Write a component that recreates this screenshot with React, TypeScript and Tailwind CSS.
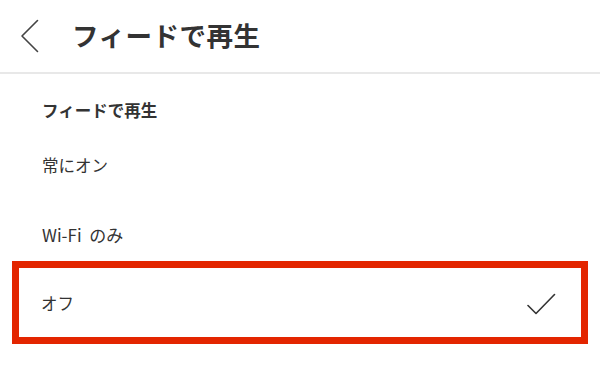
const font = { fontFamily: '"Noto Sans CJK JP", "Noto Sans", sans-serif' };

export default function App() {
  return (
    <div className="w-[600px] h-[385px] bg-white text-[#333333] overflow-hidden" style={font}>
      <header className="h-[74px] flex items-center border-b-2 border-[#e8e8e8]">
        <svg className="ml-[20px] w-[20px] h-[34px]" viewBox="0 0 20 34" fill="none">
          <path d="M17.5 1.5 L2 17 L17.5 32.5" stroke="#444444" strokeWidth="1.6" strokeLinecap="round" strokeLinejoin="round" />
        </svg>
        <h1 className="ml-[32px] text-[26.5px] font-bold leading-none tracking-[0.5px] -mt-[1px]">フィードで再生</h1>
      </header>

      <div className="px-[42px] pt-[26px] leading-[20px] text-[16.5px] font-bold">フィードで再生</div>

      <div className="mt-[10px]">
        <div className="h-[70px] flex items-center px-[42px] text-[16.5px]">常にオン</div>
        <div className="h-[70px] flex items-center px-[42px] text-[17px]">Wi-Fi&nbsp; のみ</div>
        <div className="-mt-[9px] mx-[12px] h-[83px] border-[7px] border-[#e32500] flex items-center justify-between pl-[22px] pr-[25px] text-[16.5px]">
          <span className="mt-[2px]">オフ</span>
          <svg className="w-[29px] h-[22px] mt-[2px]" viewBox="0 0 29 22" fill="none">
            <path d="M1 12.5 L9 20.5 L27.5 1.5" stroke="#333333" strokeWidth="1.6" strokeLinecap="round" strokeLinejoin="round" />
          </svg>
        </div>
      </div>
    </div>
  );
}
